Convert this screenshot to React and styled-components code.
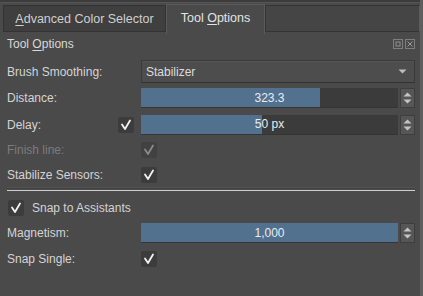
import React from "react";
import styled, { createGlobalStyle } from "styled-components";

const GlobalStyle = createGlobalStyle`
  html, body {
    margin: 0;
    padding: 0;
    background: #4a4a4a;
  }
  body {
    font-family: "Liberation Sans", Arial, sans-serif;
    font-size: 12px;
    color: #d4d4d4;
  }
`;

const Panel = styled.div`
  width: 420px;
  height: 296px;
  background: #4a4a4a;
  border-right: 3px solid #5e5e5e;
  display: flex;
  flex-direction: column;
`;

const TabBar = styled.div`
  height: 30px;
  display: flex;
  align-items: flex-end;
  padding: 2px 0 0 3px;
  border-top: 2px solid #3c3c3c;
  box-shadow: inset 0 1px 0 #555;
`;

const Tab = styled.div`
  box-sizing: border-box;
  height: ${(p) => (p.active ? "30px" : "27px")};
  margin-bottom: ${(p) => (p.active ? "0" : "2px")};
  width: ${(p) => p.w}px;
  display: flex;
  align-items: center;
  justify-content: center;
  background: ${(p) => (p.active ? "#4a4a4a" : "#3f3f3f")};
  border: 1px solid ${(p) => (p.active ? "#5a5a5a" : "#333")};
  border-bottom: ${(p) => (p.active ? "none" : "1px solid #333")};
  color: ${(p) => (p.active ? "#e4e4e4" : "#cfcfcf")};
  font-size: 12.5px;
  padding-bottom: ${(p) => (p.active ? "4px" : "0")};

  u {
    text-decoration: underline;
    text-underline-offset: 2px;
  }
`;

const TabFiller = styled.div`
  flex: 1;
  box-sizing: border-box;
  height: 27px;
  margin-bottom: 2px;
  background: #454545;
  border: 1px solid #353535;
  border-right: 1px solid #5c5c5c;
`;

const TitleRow = styled.div`
  height: 19px;
  display: flex;
  align-items: center;
  justify-content: space-between;
  padding: 0 5px 0 7px;
`;

const Title = styled.span`
  font-size: 12px;
  color: #d8d8d8;
  u {
    text-underline-offset: 2px;
  }
`;

const DockButtons = styled.div`
  display: flex;
  gap: 2px;
  svg {
    display: block;
  }
`;

const Form = styled.div`
  padding: 6px 5px 0 7px;
  display: flex;
  flex-direction: column;
`;

const Row = styled.div`
  height: ${(p) => p.h}px;
  display: grid;
  grid-template-columns: 134px 1fr;
  align-items: center;
`;

const LabelCell = styled.div`
  display: flex;
  align-items: center;
  justify-content: space-between;
  padding-right: 7px;
`;

const Label = styled.span`
  color: ${(p) => (p.disabled ? "#7c7c7c" : "#d4d4d4")};
`;

const Combo = styled.div`
  box-sizing: border-box;
  height: 23px;
  display: flex;
  align-items: center;
  justify-content: space-between;
  padding: 0 7px 0 4px;
  background: #4d4d4d;
  border: 1px solid #3a3a3a;
  border-bottom-color: #333;
  box-shadow: inset 0 1px 0 #555;
  color: #dcdcdc;
`;

const SliderGroup = styled.div`
  display: flex;
  align-items: stretch;
  height: 20px;
  gap: 2px;
`;

const Slider = styled.div`
  position: relative;
  flex: 1;
  background: #3b3b3b;
  border-bottom: 1px solid #353535;
  overflow: hidden;
`;

const Fill = styled.div`
  height: 100%;
  background: #52718f;
`;

const SliderValue = styled.span`
  position: absolute;
  inset: 0;
  display: flex;
  align-items: center;
  justify-content: center;
  color: #e8ecf0;
  font-size: 12px;
`;

const Spin = styled.div`
  width: 15px;
  background: #565656;
  border: 1px solid #3e3e3e;
  box-sizing: border-box;
  display: flex;
  flex-direction: column;
  align-items: center;
  justify-content: center;
  gap: 2px;
`;

const Box = styled.div`
  width: 16px;
  height: 16px;
  border-radius: 2px;
  background: ${(p) => (p.disabled ? "#414141" : "#3c3c3c")};
  display: flex;
  align-items: center;
  justify-content: center;
`;

const Separator = styled.div`
  margin: 3px 0 5px 0;
  height: 1px;
  background: #cfcfcf;
  box-shadow: 0 -2px 0 #434343, 0 -3px 0 #525252;
`;

const CheckRow = styled.div`
  height: ${(p) => p.h}px;
  display: flex;
  align-items: center;
  gap: 8px;
  padding-left: 1px;
`;

const Check = ({ disabled }) => (
  <Box disabled={disabled}>
    <svg width="12" height="12" viewBox="0 0 12 12">
      <path
        d="M2 5.5 L5 10 L10 1.5"
        fill="none"
        stroke={disabled ? "#8a8a8a" : "#f2f2f2"}
        strokeWidth="1.8"
        strokeLinecap="round"
        strokeLinejoin="round"
      />
    </svg>
  </Box>
);

const Arrows = () => (
  <>
    <svg width="9" height="5" viewBox="0 0 9 5">
      <path d="M0.5 4.5 L4.5 0.5 L8.5 4.5 Z" fill="#c4c4c4" />
    </svg>
    <svg width="9" height="5" viewBox="0 0 9 5">
      <path d="M0.5 0.5 L4.5 4.5 L8.5 0.5 Z" fill="#c4c4c4" />
    </svg>
  </>
);

const SpinSlider = ({ value, fill }) => (
  <SliderGroup>
    <Slider>
      <Fill style={{ width: `${fill}%` }} />
      <SliderValue>{value}</SliderValue>
    </Slider>
    <Spin>
      <Arrows />
    </Spin>
  </SliderGroup>
);

const App = () => {
  return (
    <>
      <GlobalStyle />
      <Panel>
        <TabBar>
          <Tab w={163}>
            <span>
              <u>A</u>dvanced Color Selector
            </span>
          </Tab>
          <Tab active w={99}>
            <span>
              Tool <u>O</u>ptions
            </span>
          </Tab>
          <TabFiller />
        </TabBar>

        <TitleRow>
          <Title>
            Tool <u>O</u>ptions
          </Title>
          <DockButtons>
            <svg width="10" height="10" viewBox="0 0 10 10">
              <rect x="0.5" y="0.5" width="9" height="9" fill="none" stroke="#7e7e7e" />
              <rect x="3" y="3" width="4" height="4" fill="none" stroke="#8e8e8e" />
            </svg>
            <svg width="10" height="10" viewBox="0 0 10 10">
              <rect x="0.5" y="0.5" width="9" height="9" fill="none" stroke="#7e7e7e" />
              <path d="M2.5 2.5 L7.5 7.5 M7.5 2.5 L2.5 7.5" stroke="#9a9a9a" />
            </svg>
          </DockButtons>
        </TitleRow>

        <Form>
          <Row h={25}>
            <Label>Brush Smoothing:</Label>
            <Combo>
              <span>Stabilizer</span>
              <svg width="9" height="5" viewBox="0 0 9 5">
                <path d="M0.5 0.5 L4.5 4.5 L8.5 0.5 Z" fill="#bdbdbd" />
              </svg>
            </Combo>
          </Row>
          <Row h={28}>
            <Label>Distance:</Label>
            <SpinSlider value="323.3" fill={69.5} />
          </Row>
          <Row h={25}>
            <LabelCell>
              <Label>Delay:</Label>
              <Check />
            </LabelCell>
            <SpinSlider value="50 px" fill={47} />
          </Row>
          <Row h={25}>
            <Label disabled>Finish line:</Label>
            <Check disabled />
          </Row>
          <Row h={25}>
            <Label>Stabilize Sensors:</Label>
            <Check />
          </Row>
          <Separator />
          <CheckRow h={24}>
            <Check />
            <Label>Snap to Assistants</Label>
          </CheckRow>
          <Row h={26}>
            <Label>Magnetism:</Label>
            <SpinSlider value="1,000" fill={100} />
          </Row>
          <Row h={25}>
            <Label>Snap Single:</Label>
            <Check />
          </Row>
        </Form>
      </Panel>
    </>
  );
};

export default App;
